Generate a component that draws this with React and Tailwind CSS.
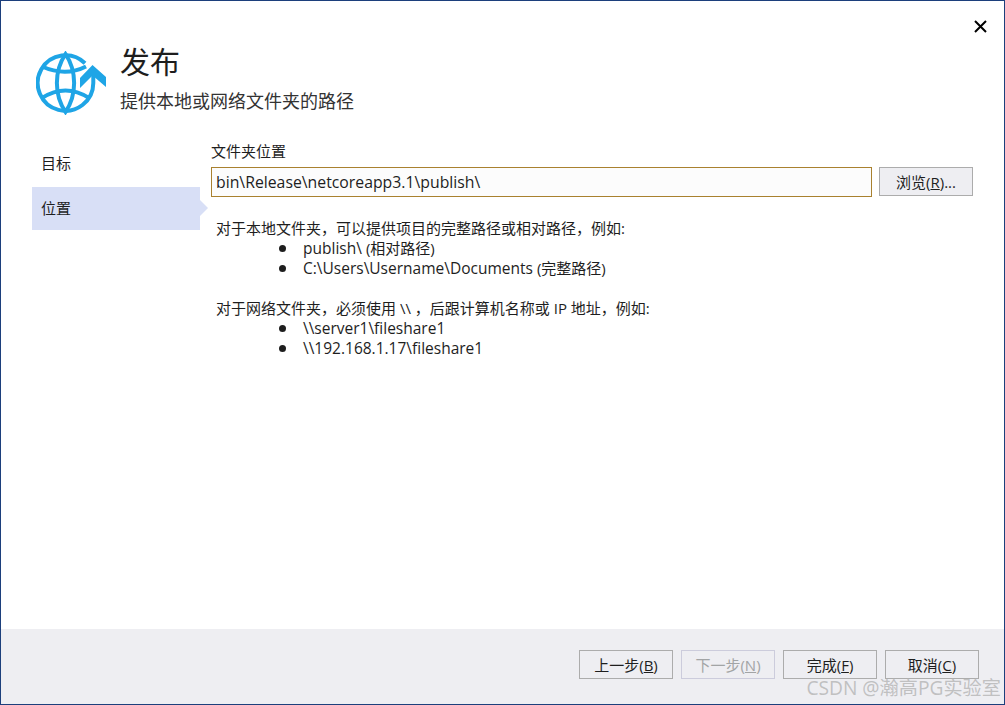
const FONT = "font-['Open_Sans','Noto_Sans_CJK_SC',sans-serif]";

function Globe() {
  return (
    <svg width="72" height="64" viewBox="0 0 72 64" fill="none" className="shrink-0">
      <g stroke="#1fa5e6" strokeWidth="4" fill="none">
        <path d="M49 12.2A27.8 27.8 0 1 0 57.3 32V18" />
        <path d="M29.5 3C18 20 18 44 29.5 61C41 44 41 20 29.5 3Z" />
        <path d="M6 15.5Q29.5 26 50 15.5" />
        <path d="M6 47Q29.5 32 53 47" />
      </g>
      <path d="M56.5 14L70 26V36L56.5 24.5L44 37V27Z" fill="#1fa5e6" />
    </svg>
  );
}

function Btn({ label, k, rest = ")", disabled }) {
  return (
    <button
      className={`w-[94px] h-[29px] border text-[15px] leading-none pt-px flex items-center justify-center bg-[#eeeef2] ${
        disabled ? "border-[#ccccdc] text-[#a2a4a5]" : "border-[#acacac] text-[#1e1e1e]"
      }`}
    >
      <span>{label}(<span className="underline">{k}</span>{rest}</span>
    </button>
  );
}

function Bullet({ children }) {
  return (
    <li className="flex h-5 items-center">
      <span className="w-[7px] h-[7px] rounded-full bg-[#1e1e1e] ml-[63px] mr-[17px] shrink-0" />
      <span>{children}</span>
    </li>
  );
}

const Lat = ({ children }) => <span className="text-[15.5px]">{children}</span>;

export default function App() {
  return (
    <div className={`relative w-[1005px] h-[705px] bg-white border border-[#1c3f7c] flex flex-col text-[#1e1e1e] overflow-hidden ${FONT}`}>
      <button className="absolute top-[19px] right-[17px] text-black" aria-label="close">
        <svg width="13" height="13" viewBox="0 0 13 13" stroke="currentColor" strokeWidth="2"><path d="M1 1L12 12M12 1L1 12" /></svg>
      </button>

      <header className="flex pl-[35px] pt-[50px] h-[144px] shrink-0">
        <Globe />
        <div className="ml-[13px] -mt-[9px] -translate-x-px">
          <h1 className="text-[30px] leading-[40px] font-normal text-[#1e1e1e]">发布</h1>
          <p className="text-[18px] leading-[24px] mt-[7px] text-[#333]">提供本地或网络文件夹的路径</p>
        </div>
      </header>

      <main className="flex flex-1 min-h-0">
        <nav className="w-[168px] ml-[31px] text-[15px] shrink-0 -mt-px">
          <div className="h-[43px] flex items-center pl-[9px] -translate-y-[2px]">目标</div>
          <div className="relative h-[43px] flex items-center pl-[9px] bg-[#d8dff6]">
            位置
            <span className="absolute left-full top-[13px] border-y-[8px] border-y-transparent border-l-[8px] border-l-[#d8dff6]" />
          </div>
        </nav>
        <section className="ml-[11px] w-[762px] text-[15px]">
          <label className="block h-[22px] leading-[20px] -mt-[4px]">文件夹位置</label>
          <div className="flex gap-[7px] items-start mt-[4px]">
            <div className="w-[661px] h-[30px] border border-[#a9812f] bg-[#fcfcfc] flex items-center pl-[4px] pt-px text-[15.8px] text-[#1e1e1e]">bin\Release\netcoreapp3.1\publish\</div>
            <Btn label="浏览" k="R" rest=")..." />
          </div>
          <div className="pl-[5px] mt-[21px] leading-5">
            <p>对于本地文件夹，可以提供项目的完整路径或相对路径，例如:</p>
            <ul>
              <Bullet><Lat>publish\ </Lat>(相对路径)</Bullet>
              <Bullet><Lat>C:\Users\Username\Documents </Lat>(完整路径)</Bullet>
            </ul>
            <p className="mt-5">对于网络文件夹，必须使用 \\ ，后跟计算机名称或 IP 地址，例如:</p>
            <ul>
              <Bullet><Lat>\\server1\fileshare1</Lat></Bullet>
              <Bullet><Lat>\\192.168.1.17\fileshare1</Lat></Bullet>
            </ul>
          </div>
        </section>
      </main>

      <footer className="h-[75px] shrink-0 bg-[#eeeef2] flex justify-end items-start gap-2 pt-[21px] pr-[25px]">
        <Btn label="上一步" k="B" />
        <Btn label="下一步" k="N" disabled />
        <Btn label="完成" k="F" />
        <Btn label="取消" k="C" />
      </footer>

      <div className="absolute right-[3px] bottom-[4px] text-[19.2px] leading-6 text-[#b4b4b4]/80 pointer-events-none">CSDN @瀚高PG实验室</div>
    </div>
  );
}
